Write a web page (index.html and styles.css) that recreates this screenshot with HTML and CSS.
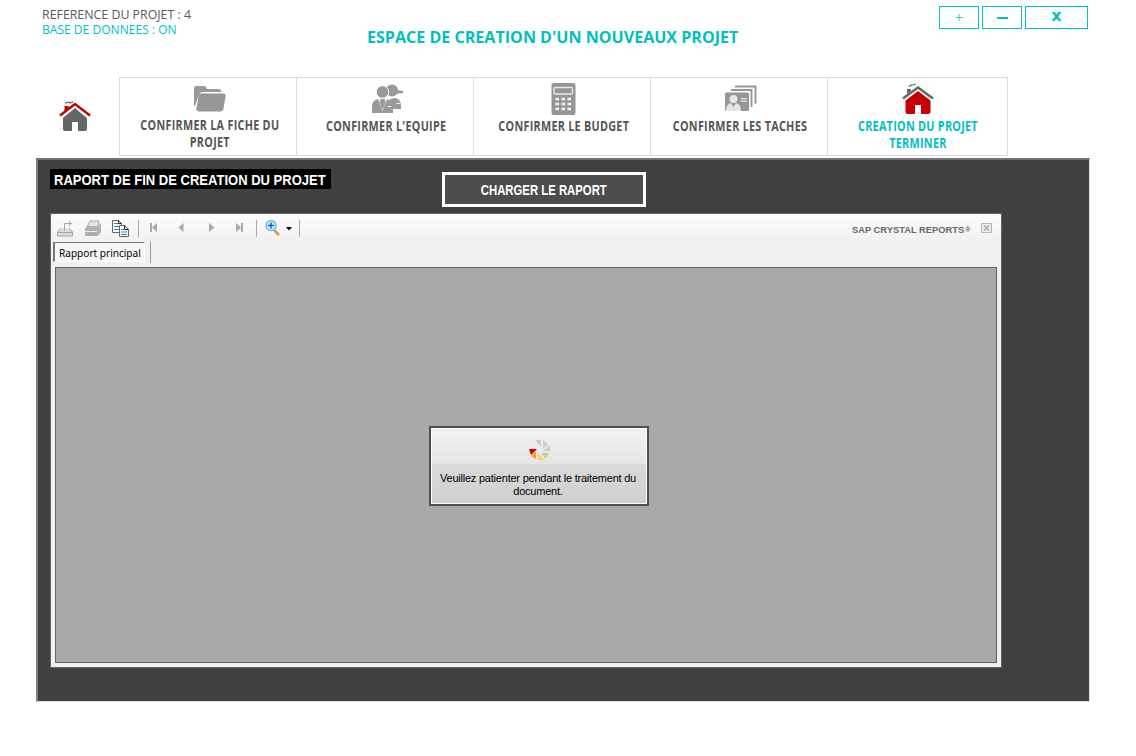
FILE: index.html
```html
<!DOCTYPE html>
<html lang="fr">
<head>
<meta charset="utf-8">
<title>Espace de création</title>
<link rel="stylesheet" href="styles.css">
</head>
<body>
<header class="header">
  <div class="status">
    <div><span class="fit ref">REFERENCE DU PROJET : 4</span></div>
    <div class="teal"><span class="fit base">BASE DE DONNEES : ON</span></div>
  </div>
  <h1 class="title"><span class="fit">ESPACE DE CREATION D'UN NOUVEAUX PROJET</span></h1>
  <div class="window-buttons">
    <button class="plus">+</button><button><i class="minus"></i></button><button class="close">x</button>
  </div>
</header>

<nav class="nav">
  <a class="home">
    <svg width="32" height="32" viewBox="0 0 32 32"><path d="M4 18L16 8l12 10v11q0 2-2 2h-7v-9h-6v9H6q-2 0-2-2z" fill="#666"/><path d="M1 15.500L16 4l15 11.500" fill="none" stroke="#c40000" stroke-width="2.500"/><path d="M5.500 6h4v3l-4 3z" fill="#c40000"/><path d="M6 3.500q2-2 4-1t4-1" fill="none" stroke="#777" stroke-width="1.500"/></svg>
  </a>
  <a class="step">
    <svg width="34" height="32" viewBox="0 0 34 32"><path d="M1 22V5q0-2 2-2h8q2 0 3 3h12q2 0 2.500 3H10q-3 0-4 3L2 23z" fill="#999"/><path d="M8 10.500h22q3 0 2.500 3l-2 12q-.5 3-3 3H6q-3 0-2.500-3l2-12q.5-3 2.500-3z" fill="#969696"/></svg>
    <span class="label up"><span class="fit">CONFIRMER LA FICHE DU<br>PROJET</span></span>
  </a>
  <a class="step">
    <svg width="34" height="32" viewBox="0 0 34 32"><g fill="#999"><circle cx="22" cy="7.500" r="6"/><path d="M27 7l6 1v2.500l-3-.5-3 1zM20 16l5-1q5.500 1 6 7v4h-9z"/><circle cx="12.500" cy="9" r="6.300" stroke="#fff"/><path d="M2 30v-6q0-7 6-8l4.500 12L17 16q6 1 6 9v5zM10.500 16h4l1 3-3 8-3-8z"/></g><path d="M17.500 23.500h4M26 20.500h4" stroke="#eee"/></svg>
    <span class="label"><span class="fit">CONFIRMER L'EQUIPE</span></span>
  </a>
  <a class="step">
    <svg width="34" height="32" viewBox="0 0 34 32"><rect x="4.500" y="0" width="24" height="32" rx="2.500" fill="#969696"/><rect x="7" y="4.500" width="18.500" height="6.500" rx="1" fill="none" stroke="#e8e8e8" stroke-width="1.300"/><path d="M8.500 16h17M8.500 21h17M8.500 26h17" stroke="#f4f4f4" stroke-width="2.300" stroke-dasharray="3.500 2.500"/></svg>
    <span class="label"><span class="fit">CONFIRMER LE BUDGET</span></span>
  </a>
  <a class="step">
    <svg width="34" height="32" viewBox="0 0 34 32"><path d="M11 3.500h20.500v17M7 7h20.500v17" fill="none" stroke="#969696" stroke-width="1.900"/><rect x="1" y="9.500" width="24" height="18.500" rx="1.500" fill="#969696"/><circle cx="9.500" cy="16" r="4" fill="#e6e6e6"/><path d="M2 28q0-7 5-8l2.500 4 2.500-4q5 1 5 8zM17 15h6v1.200h-6zM17 17.500h6v1.200h-6z" fill="#e6e6e6"/></svg>
    <span class="label"><span class="fit">CONFIRMER LES TACHES</span></span>
  </a>
  <a class="step last">
    <svg width="34" height="32" viewBox="0 0 32 32"><path d="M3.500 17.500L16 8l12.500 9.500V29q0 2-2 2H19v-9h-6v9H5.500q-2 0-2-2z" fill="#c40000"/><path d="M1 15.500L16 4.500l15 11" fill="none" stroke="#666" stroke-width="2.500"/><path d="M5 6h4v2l-4 3z" fill="#666"/><path d="M7 4q1-2 3-2t4-1" fill="none" stroke="#777" stroke-width="1.300"/></svg>
    <span class="label"><span class="fit">CREATION DU PROJET<br>TERMINER</span></span>
  </a>
</nav>

<main class="panel">
  <div class="panel-head">
    <h2 class="report-title"><span class="fit">RAPORT DE FIN DE CREATION DU PROJET</span></h2>
    <button class="load"><span class="fit">CHARGER LE RAPORT</span></button>
  </div>
  <section class="viewer">
    <div class="toolbar">
      <svg class="tools" width="254" height="28" viewBox="0 0 254 28">
        <g fill="none" stroke="#a6a6a6"><path d="M10.500 14.500L7.500 18v4h15v-4l-3-3.500M7.500 18.500h15" fill="#ddd"/><path d="M14.500 17V9.500H21M18.500 7l3 2.500-3 2.500"/></g>
        <path d="M40 7h9l-1 6H37z" fill="#e5e5e5" stroke="#aaa"/><path d="M35 14l3-2h10l3-3v9l-3 4H35z" fill="#b3b3b3"/><path d="M35 17.500h12" stroke="#eee"/><path d="M37 20h8" stroke="#999"/>
        <g fill="#fff" stroke="#666"><path d="M62.500 6.500h6l3 3v9h-9z"/><path d="M69.500 11.500h5l4 4v7h-9z"/></g><path d="M64 9.500h4M64 12.500h5M64 15.500h5M71 15.500h3M71 18h6M71 20.500h6" stroke="#2388cc"/><path d="M68.500 6.500v3h3M74.500 11.500v4h4" fill="none" stroke="#222"/>
        <path d="M88.500 6v17M206.500 6v17M249.500 6v17" stroke="#aaa"/>
        <g fill="#aaa"><path d="M100 9h2v9h-2zM107 9v9l-5-4.500zM133.500 9v9l-5-4.500zM159 9v9l5.500-4.500zM186 9v9l5-4.500zM191 9h2v9h-2z"/><path d="M236 13h6l-3 3.500z" fill="#000"/></g>
        <path d="M224 16l5 5" stroke="#d49a54" stroke-width="2.500"/><circle cx="221" cy="11.500" r="5" fill="#c4ecff" stroke="#75b9ee" stroke-width="1.500"/><path d="M218 11.500h6M221 8.500v6" stroke="#1763b0" stroke-width="1.500"/>
      </svg>
      <span class="sap">SAP CRYSTAL REPORTS<sup>®</sup></span>
      <svg class="x" width="12" height="11" viewBox="0 0 12 11"><path d="M.5.500h10v9H.5z" fill="#eee" stroke="#b5b5b5"/><path d="M3 2.500l5 5M8 2.500l-5 5" stroke="#aaa" stroke-width="1.500"/></svg>
    </div>
    <div class="tabs"><span class="tab"><span class="fit">Rapport principal</span></span><i class="sep"></i></div>
    <div class="document">
      <div class="wait">
        <svg width="22" height="22" viewBox="0 0 22 22"><g fill="#ccc"><path d="M6 1h6v7zM14 1l5 4-5 5zM21 6v6h-7z"/></g><path d="M0 10h8l-6 6z" fill="#c00"/><path d="M7 12v8l-5-3z" fill="#ff9933"/><path d="M9 14l6 7H9z" fill="#ffcc66"/><path d="M12 14h8l-3 6z" fill="#cccc99"/></svg>
        <p>Veuillez patienter pendant le traitement du<br>document.</p>
      </div>
    </div>
  </section>
</main>
</body>
</html>
```
FILE: styles.css
```css
* { box-sizing: border-box; }
body { margin: 0; width: 1136px; height: 756px; background: #fff; overflow: hidden; font-family: "Open Sans", sans-serif; }
button { background: none; border: 0; padding: 0; margin: 0; }
.fit { display: inline-block; white-space: nowrap; }
.header { display: grid; grid-template-columns: 312px 1fr 197px; height: 77px; }
.status { padding: 7px 0 0 42px; font-size: 12px; line-height: 15px; color: #595959; }
.status .fit { transform-origin: left; }
.ref { transform: scaleX(1.03); }
.base { transform: scaleX(1.005); }
.teal { color: #00c0c0; }
.title { margin: 0; padding: 25px 0 0 55px; font-size: 16.500px; line-height: 24px; font-weight: 700; color: #00bfbf; }
.title .fit { transform: scaleX(.974); transform-origin: left; }
.window-buttons { display: flex; gap: 3px; padding-top: 6px; }
.window-buttons button { width: 40px; height: 23px; border: 1px solid #00bfbf; color: #00bfbf; display: flex; align-items: center; justify-content: center; }
.window-buttons .plus { font: 15px "Liberation Serif", serif; }
.window-buttons .close { width: 63px; font: bold 16px/17px "DejaVu Sans", sans-serif; padding-bottom: 4px; }
.minus { width: 11px; height: 2px; background: #00bfbf; margin-top: 1px; }

.nav { display: grid; grid-template-columns: 83px 177px 177px 177px 177px 181px; height: 79px; margin-left: 36px; width: 972px; }
.home { padding: 23px 0 0 23px; }
.step { border: 1px solid #dcdcdc; border-right: 0; display: flex; flex-direction: column; align-items: center; padding: 5px 0 0 4px; }
.step svg { flex: none; }
.last { border-right: 1px solid #dcdcdc; padding-left: 0; }
.label { margin: 3px 0 0 -1px; font-size: 13.500px; line-height: 17px; font-weight: 700; color: #555; text-align: center; letter-spacing: .35px; }
.up { margin-top: 2px; }
.label .fit { transform: scaleX(.8); }
.last .label { color: #00bfbf; margin-left: 0; }

.panel { width: 1054px; height: 543px; margin: 2px 0 0 36px; background: #404040; border: 2px solid #6e6e6e; border-top-color: #737373; border-left-color: #808080; border-right: 1px solid #e3e3e3; border-bottom: 1px solid #e3e3e3; padding: 9px 0 0 12px; height: 544px; }
.panel-head { display: flex; height: 44px; align-items: flex-start; }
.report-title { margin: 0; width: 281px; height: 20px; background: #000; color: #fff; font: bold 14.670px/22px "Liberation Sans", sans-serif; padding-left: 4px; }
.report-title .fit { transform: scaleX(.888); transform-origin: left; }
.load { width: 204px; height: 35px; margin: 3px 0 0 111px; border: 3px solid #fff; background: #4d4d4d; color: #fff; font: bold 14px/31px "Liberation Sans", sans-serif; display: flex; justify-content: center; padding-right: 1px; }
.load .fit { transform: scaleX(.81); }
.viewer { width: 952px; height: 455px; border: 1px solid #646464; background: #f0f0f0; padding: 0 4px 4px; display: flex; flex-direction: column; }
.toolbar { height: 28px; margin: 0 -4px; display: flex; align-items: flex-start; background: linear-gradient(#fdfdfd, #f0f0f0); border-radius: 3px; }
.tools { margin-left: -1px; }
.sap { margin: 9px 0 0 548px; width: 120px; font: bold 9.330px/14px "Liberation Sans", sans-serif; color: #666; white-space: nowrap; }
.sap sup { font-size: 7px; line-height: 0; vertical-align: 1px; margin-left: 1px; }
.x { margin: 9px 0 0 9px; }
.tabs { height: 25px; display: flex; margin-left: -2px; }
.tab { width: 92px; height: 20px; border: 1px solid #fff; border-top: 1px solid #777; border-left: 2px solid #777; background: #f7f7f7; font: 11px/19px "Noto Sans", sans-serif; color: #000; padding-left: 4px; }
.tab .fit { transform: scaleX(.915); transform-origin: left; }
.sep { width: 1px; height: 21px; margin-left: 5px; background: #999; }
.document { flex: 1; border: 1px solid #646464; background: #a9a9a9; display: flex; justify-content: center; padding-top: 158px; }
.wait { width: 220px; height: 80px; margin-left: 26px; border: 2px solid #505050; background: linear-gradient(#f3f3f3, #e5e5e5 47%, #dadada 47%, #cfcfcf); box-shadow: inset 0 0 0 1px #fff; display: flex; flex-direction: column; align-items: center; padding: 11px 0 0; }
.wait svg { margin-left: 2px; }
.wait p { margin: 11px 2px 0 0; font: 11px/13px "Liberation Sans", sans-serif; color: #000; text-align: center; letter-spacing: -.22px; white-space: nowrap; }
```
